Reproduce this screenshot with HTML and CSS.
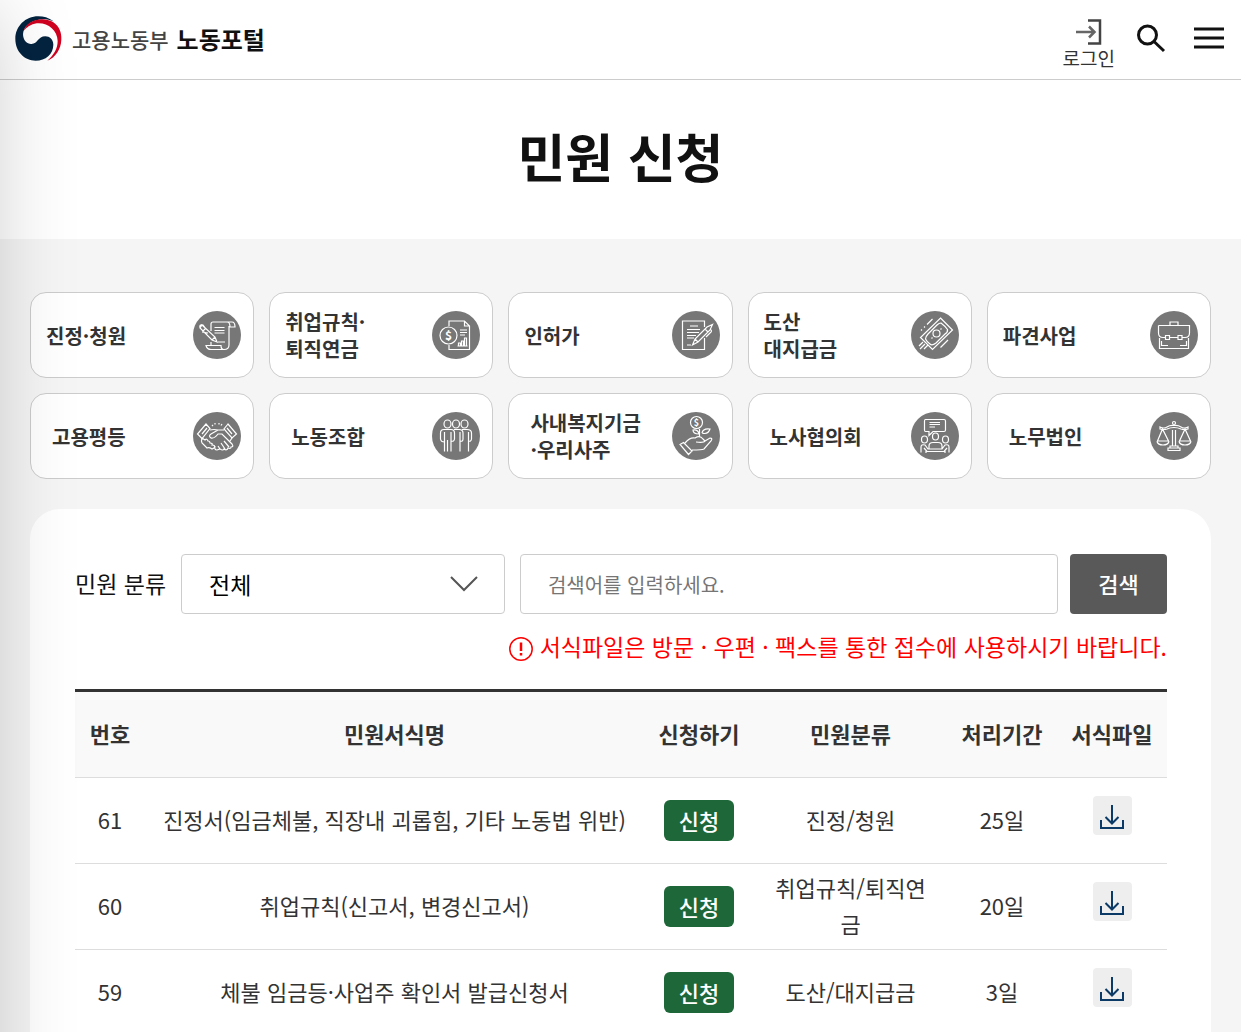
FILE: index.html
```
<!DOCTYPE html>
<html lang="ko">
<head>
    <meta charset="UTF-8">
    <meta name="viewport" content="width=device-width, initial-scale=1.0">
    <title>민원 신청 | 고용노동부 노동포털</title>
    <link rel="stylesheet" href="styles.css">
</head>
<body>
    <header class="header">
        <a href="#" class="logo">
            <svg class="logo-mark" viewBox="0 0 141 135" aria-hidden="true">
                <path fill="#03233f" d="M116 16C100 5 86 1 70 1C31 1 1 31 1 69C1 107 29 134 62 134C92 134 115 114 115 86C115 71 104 61 91 61C67 61 69 86 47 84C31 82 21 65 25 47C34 17 76 0 116 16Z"/>
                <path fill="#d0021f" d="M25 46C36 11 83 0 114 18C133 31 140 49 139 71C138 99 122 124 97 134C117 116 128 98 128 75C127 25 60 0 25 46Z"/>
            </svg>
            <span class="logo-org">고용노동부</span>
            <strong class="logo-name">노동포털</strong>
        </a>
        <div class="utils">
            <a href="#" class="login">
                <svg width="26" height="26" viewBox="0 0 26 26" fill="none" aria-hidden="true">
                    <path stroke="#444" stroke-width="2.500" d="M12 1.500H24V24.500H12"/>
                    <path stroke="#666" stroke-width="2.500" d="M0 13H18M13 7.500L18.500 13L13 18.500"/>
                </svg>
                <span>로그인</span>
            </a>
            <button type="button" class="icon-btn" aria-label="검색 열기">
                <svg width="30" height="30" viewBox="0 0 30 30" fill="none" stroke="#111" stroke-width="3" aria-hidden="true">
                    <circle cx="11.500" cy="12" r="9"/>
                    <path d="M18 18.500L28 28"/>
                </svg>
            </button>
            <button type="button" class="icon-btn" aria-label="전체 메뉴">
                <svg width="30" height="30" viewBox="0 0 30 30" fill="none" stroke="#111" stroke-width="3" aria-hidden="true">
                    <path d="M0 6H30M0 15H30M0 24H30"/>
                </svg>
            </button>
        </div>
    </header>

    <h1 class="page-title">민원 신청</h1>

    <main class="content">
        <nav class="cards" aria-label="민원 분야">
            <a href="#" class="card">
                <span>진정·청원</span>
                <svg class="card-icon" viewBox="0 0 48 48" aria-hidden="true">
                    <path d="M18 20V13Q18 11 20 11H39Q42 11 42 16H37Q37 11 34 11M36 15V34Q36 38.500 31 38.500H18Q14 38.500 13 34.500H28Q28 38.500 31 38.500M18 31V34.500"/>
                    <path d="M21.500 16.500H31.500M21.500 19.500H31.500M21.500 22H31.500M25 31H32" stroke-dasharray="10 1"/>
                    <path d="M9 14L22 26L24 31L19 29L7 17ZM7 17Q6 13 10 14L13 18M10 20L13 17M19 29L22 26M15 22L9 21"/>
                </svg>
            </a>
            <a href="#" class="card">
                <span>취업규칙·<br>퇴직연금</span>
                <svg class="card-icon" viewBox="0 0 48 48" aria-hidden="true">
                    <path d="M17 15V10H32.500L37.500 15V38.500H17V34M32.500 10V15H37.500"/>
                    <circle cx="16.500" cy="24.500" r="8.500"/>
                    <text x="16.500" y="29" class="icon-coin">$</text>
                    <path d="M28 19H35M28 21.500H35M28 24H33M25.500 35H35.500M26.500 35V32H28.500V35M29.500 35V30H31.500V35M32.500 35V27H34.500V35"/>
                </svg>
            </a>
            <a href="#" class="card">
                <span>인허가</span>
                <svg class="card-icon" viewBox="0 0 48 48" aria-hidden="true">
                    <path d="M32.500 16V10H10.500V38.500H32.500V27"/>
                    <path d="M18 15H26M15 18.500H28M15 21.500H27M15 24.500H24M15 27H22M15 34H19"/>
                    <path d="M20.500 34L23 28L35 16L40.500 13.500L38 19L26 31ZM23 28L26 31M33 18L36 21M38 18Q41 20 38 22L34 26"/>
                </svg>
            </a>
            <a href="#" class="card">
                <span>도산<br>대지급금</span>
                <svg class="card-icon" viewBox="0 0 48 48" aria-hidden="true">
                    <path d="M29.500 7L41.500 19L21.500 38.500L9.500 26.500Z"/>
                    <path d="M30 12Q34 15 36.500 18.500Q37 21 34 23L25 32Q21 35 19 33Q16 31 14.500 28Q15 25 17 23L26 14Q28 12 30 12Z"/>
                    <circle cx="25.500" cy="22.500" r="3.500"/>
                    <path d="M29.500 18.500L30.500 17.500M20.500 27.500L21.500 26.500M21.500 8L16 13.500M14 15.500L13 16.500M11 18.500L10 19.500M37 29L29.500 36.500M12 31L8 35M14 33L9 38M17 34L13 38"/>
                </svg>
            </a>
            <a href="#" class="card">
                <span>파견사업</span>
                <svg class="card-icon" viewBox="0 0 48 48" aria-hidden="true">
                    <path d="M8.500 14.500H39.500V22Q39.500 26.500 35 26.500H32M28 26.500H19.500M15.500 26.500H13Q8.500 26.500 8.500 22V14.500M9.500 27V37.500H38.500V27M20 14V11H28V14"/>
                    <path d="M15.500 24.500H19.500V28.500H15.500ZM28 24.500H32V28.500H28ZM11.500 30V34.500H18M36.500 30V34.500H30"/>
                </svg>
            </a>
            <a href="#" class="card card-inset">
                <span>고용평등</span>
                <svg class="card-icon" viewBox="0 0 48 48" aria-hidden="true">
                    <path d="M13 12L17 16.500L9 26.500L4.500 22ZM35 12L31 17L39 26L43.500 22ZM14 16L9 22M34 16L39 22"/>
                    <path d="M17 18Q21 17 25 18L18 22Q15 24 18 26Q21 27 25 22H29L39 32Q41 35 38 35Q38 37 35 36Q34 39 31 37Q30 39 27 37L24 38Q21 38 22 34M31 18H26L25 18M39 26L37 29M31 29L36 35M28 31L32 37M25 34L27 37"/>
                    <path d="M9 26L12 28Q14 26 15 29Q17 29 17 31Q20 31 19 33Q23 33 21 36L19 37Q16 35 14 36L9 31Q8 29 9 26"/>
                    <path d="M19 13L20 14M22 11V12.500M26 11V12.500M29 12L28 13.500"/>
                </svg>
            </a>
            <a href="#" class="card card-inset">
                <span>노동조합</span>
                <svg class="card-icon" viewBox="0 0 48 48" aria-hidden="true">
                    <ellipse cx="15.500" cy="12" rx="3.500" ry="4"/>
                    <ellipse cx="24" cy="12" rx="3.500" ry="4"/>
                    <ellipse cx="32.500" cy="12" rx="3.500" ry="4"/>
                    <path d="M12.500 39.500V20M12.500 30Q9 30 8.500 27V21Q8.500 17.500 12 17.500H19Q22.500 17.500 22.500 21V27Q22 30 19 29V20M19 39.500V29M15.500 28V39.500"/>
                    <path d="M22 17.500H27Q31 17.500 31 21V27Q31 30 28 29V20M28 29V39.500"/>
                    <path d="M30 17.500H35Q39.500 17.500 39.500 21V27Q39 30 36.500 29V20M36.500 29V39.500"/>
                </svg>
            </a>
            <a href="#" class="card card-inset">
                <span>사내복지기금<br>·우리사주</span>
                <svg class="card-icon" viewBox="0 0 48 48" aria-hidden="true">
                    <circle cx="24.500" cy="10.500" r="6"/>
                    <text x="24.500" y="14" class="icon-coin icon-coin-small">$</text>
                    <path d="M27.500 17V25M27 22Q21 22 21 18Q26 17 27 22M30 21Q31 16 38 17Q36 23 30 21"/>
                    <path d="M8 32.500L11.500 30.500L20 39L16.500 42.500ZM13 31Q18 25 23 26Q28 23 31 27L33 29Q32 31 24 30M33 29L38 26Q41 26 39 29L32 37Q30 38 20 38"/>
                </svg>
            </a>
            <a href="#" class="card card-inset">
                <span>노사협의회</span>
                <svg class="card-icon" viewBox="0 0 48 48" aria-hidden="true">
                    <path d="M14.500 7.500H33Q34.500 7.500 34.500 9V18Q34.500 19.500 33 19.500H22L18 23.500V19.500H14.500Q13.500 19.500 13.500 18V9Q13.500 7.500 14.500 7.500ZM18.500 10.500H29M18.500 12.500H29M18.500 15H24"/>
                    <ellipse cx="24.500" cy="24.500" rx="3" ry="3.500"/>
                    <ellipse cx="13.500" cy="27.500" rx="3" ry="3.500"/>
                    <ellipse cx="34.500" cy="27.500" rx="3" ry="3.500"/>
                    <path d="M18 37V34Q18 30.500 22 30.500H27Q31 30.500 31 34V37M10 40.500V35Q10 32 14 33L17 37H31L34 33Q38 32 38 35V40.500M13 36L16 39.500H33L36 36M15 39V41M34 39V41"/>
                </svg>
            </a>
            <a href="#" class="card card-inset">
                <span>노무법인</span>
                <svg class="card-icon" viewBox="0 0 48 48" aria-hidden="true">
                    <circle cx="24" cy="11" r="1.500"/>
                    <path d="M22.500 34V18M25.500 34V18M24 13.500Q28 13 31 15Q34 17 38 15V17Q34 18 31 17Q24 14 17 17Q14 18 10 17V15Q14 17 17 15Q20 13 24 13.500Z"/>
                    <path d="M18 38.500V36H30V38.500ZM20 36V34H28V36M12.500 17L7.500 29H18.500ZM7 29.500Q8 33 13 33Q18 33 19 29.500M35 17L29.500 29H40.500ZM29 29.500Q30 33 35 33Q40 33 41 29.500"/>
                </svg>
            </a>
        </nav>

        <section class="panel">
            <form class="search">
                <label for="category">민원 분류</label>
                <select id="category" class="search-select">
                    <option>전체</option>
                    <option>진정/청원</option>
                    <option>취업규칙/퇴직연금</option>
                    <option>도산/대지급금</option>
                </select>
                <input type="text" class="search-input" aria-label="검색어" placeholder="검색어를 입력하세요.">
                <button type="submit" class="search-btn">검색</button>
            </form>
            <p class="notice">
                <svg width="24" height="24" viewBox="0 0 24 24" fill="none" stroke="#f00" aria-hidden="true">
                    <circle cx="12" cy="12" r="11.200" stroke-width="1.500"/>
                    <path stroke-width="2.500" d="M12 5.500V14M12 16V18.500"/>
                </svg>
                서식파일은 방문 · 우편 · 팩스를 통한 접수에 사용하시기 바랍니다.
            </p>

            <table class="forms">
                <thead>
                    <tr>
                        <th class="col-no">번호</th>
                        <th>민원서식명</th>
                        <th class="col-short">신청하기</th>
                        <th class="col-type">민원분류</th>
                        <th class="col-short">처리기간</th>
                        <th class="col-short">서식파일</th>
                    </tr>
                </thead>
                <tbody>
                    <tr>
                        <td>61</td>
                        <td>진정서(임금체불, 직장내 괴롭힘, 기타 노동법 위반)</td>
                        <td class="action"><button type="button" class="apply">신청</button></td>
                        <td>진정/청원</td>
                        <td>25일</td>
                        <td class="file">
                            <a href="#" class="download" aria-label="서식파일 내려받기">
                                <svg width="24" height="26" viewBox="0 0 24 26" aria-hidden="true"><path d="M12 2V20M5.500 14L12 20.500L18.500 14M1 17V25H23V17"/></svg>
                            </a>
                        </td>
                    </tr>
                    <tr>
                        <td>60</td>
                        <td>취업규칙(신고서, 변경신고서)</td>
                        <td class="action"><button type="button" class="apply">신청</button></td>
                        <td>취업규칙/퇴직연금</td>
                        <td>20일</td>
                        <td class="file">
                            <a href="#" class="download" aria-label="서식파일 내려받기">
                                <svg width="24" height="26" viewBox="0 0 24 26" aria-hidden="true"><path d="M12 2V20M5.500 14L12 20.500L18.500 14M1 17V25H23V17"/></svg>
                            </a>
                        </td>
                    </tr>
                    <tr>
                        <td>59</td>
                        <td>체불 임금등·사업주 확인서 발급신청서</td>
                        <td class="action"><button type="button" class="apply">신청</button></td>
                        <td>도산/대지급금</td>
                        <td>3일</td>
                        <td class="file">
                            <a href="#" class="download" aria-label="서식파일 내려받기">
                                <svg width="24" height="26" viewBox="0 0 24 26" aria-hidden="true"><path d="M12 2V20M5.500 14L12 20.500L18.500 14M1 17V25H23V17"/></svg>
                            </a>
                        </td>
                    </tr>
                </tbody>
            </table>
        </section>
    </main>

    <!-- closed side menu, only its shadow reaches into the page -->
    <div class="side-menu"></div>
</body>
</html>
```
FILE: styles.css
```
* {
    box-sizing: border-box;
}
body {
    margin: 0;
    font-family: "Noto Sans CJK KR", sans-serif;
    font-size: 22px;
    line-height: 36px;
    color: #333;
    background-color: #fff;
    overflow-x: hidden;
}
a {
    color: inherit;
    text-decoration: none;
}
button, input, select {
    font-family: inherit;
}
button {
    border: none;
    cursor: pointer;
}

.header {
    display: flex;
    align-items: center;
    justify-content: space-between;
    height: 80px;
    padding: 0 17px 0 15px;
    border-bottom: 1px solid #ccc;
}
.logo {
    display: flex;
    align-items: center;
    padding-bottom: 2px;
}
.logo-mark {
    width: 47px;
    height: 45px;
    margin-right: 10px;
}
.logo-org {
    margin-right: 8px;
    font-size: 21px;
    font-weight: 500;
    color: #444;
}
.logo-name {
    font-size: 24px;
    color: #111;
}
.utils {
    display: flex;
    align-items: center;
}
.login {
    display: flex;
    flex-direction: column;
    align-items: center;
    padding-top: 10px;
    margin-right: 21px;
    font-size: 19px;
    line-height: 26px;
}
.icon-btn {
    display: flex;
    padding: 0 0 4px;
    background: none;
}
.icon-btn + .icon-btn {
    margin-left: 28px;
}

.page-title {
    margin: 0;
    padding: 40px 0 47px;
    font-size: 52px;
    line-height: 72px;
    text-align: center;
    color: #111;
}

.content {
    padding: 53px 30px 0;
    background-color: #f5f5f5;
}
.cards {
    display: grid;
    grid-template-columns: repeat(5, 1fr);
    gap: 15px;
}
.card {
    display: flex;
    align-items: center;
    justify-content: space-between;
    height: 86px;
    padding: 0 12px 0 15px;
    border: 1px solid #ccc;
    border-radius: 16px;
    background-color: #fff;
    font-size: 20px;
    font-weight: bold;
    line-height: 27px;
}
.card-inset {
    padding-left: 21px;
}
.card-icon {
    flex: none;
    width: 48px;
    height: 48px;
    border-radius: 50%;
    background-color: #777;
    fill: none;
    stroke: #fff;
    stroke-width: 1.2;
}
.icon-coin {
    fill: #fff;
    stroke: none;
    font-size: 12px;
    text-anchor: middle;
}
.icon-coin-small {
    font-size: 9px;
}

.panel {
    margin-top: 30px;
    padding: 45px 44px 60px 45px;
    border-radius: 30px 30px 0 0;
    background-color: #fff;
}
.search {
    display: flex;
    align-items: center;
}
.search label {
    margin-right: 15px;
    padding-bottom: 2px;
    font-size: 23px;
    color: #111;
}
.search-select,
.search-input {
    min-width: 0;
    height: 60px;
    padding: 0 27px;
    border: 1px solid #ccc;
    border-radius: 4px;
    background-color: #fff;
}
.search-select {
    flex: 5;
    margin-right: 15px;
    appearance: none;
    background-image: url("data:image/svg+xml,%3Csvg xmlns='http://www.w3.org/2000/svg' width='28' height='16' fill='none' stroke='%23555' stroke-width='2'%3E%3Cpath d='M1 1L14 14L27 1'/%3E%3C/svg%3E");
    background-repeat: no-repeat;
    background-position: right 26px center;
    font-size: 23px;
    color: #000;
}
.search-input {
    flex: 9;
    margin-right: 12px;
    font-size: 20px;
}
.search-input::placeholder {
    color: #757575;
}
.search-btn {
    width: 97px;
    height: 60px;
    padding: 0 0 2px;
    border-radius: 4px;
    background-color: #595959;
    font-size: 22px;
    font-weight: 500;
    color: #fff;
}
.notice {
    display: flex;
    align-items: center;
    justify-content: flex-end;
    gap: 7px;
    margin: 14px 0 25px;
    font-size: 23px;
    color: #f00;
}
.notice svg {
    margin-top: 6px;
}

.forms {
    width: 100%;
    table-layout: fixed;
    border-collapse: collapse;
    border-top: 3px solid #333;
    text-align: center;
}
.forms th,
.forms td {
    height: 86px;
    padding: 0 15px 4px;
    border-bottom: 1px solid #ddd;
}
.forms th {
    height: 87px;
    padding: 0 0 4px;
    background-color: #f9f9f9;
}
.forms .col-no {
    width: 70px;
}
.forms .col-short {
    width: 110px;
}
.forms .col-type {
    width: 193px;
}
.forms .action {
    padding-bottom: 2px;
}
.apply {
    height: 41px;
    padding: 0 15px;
    border-radius: 6px;
    background-color: #1d6738;
    font-size: 22px;
    font-weight: 500;
    line-height: 41px;
    color: #fff;
    vertical-align: middle;
}
.forms .file {
    padding-bottom: 12px;
}
.download {
    display: inline-flex;
    align-items: center;
    justify-content: center;
    width: 39px;
    height: 39px;
    border-radius: 4px;
    background-color: #eee;
    vertical-align: middle;
}
.download svg {
    fill: none;
    stroke: #0b3a66;
    stroke-width: 2;
}

.side-menu {
    position: fixed;
    top: 0;
    bottom: -100px;
    right: 100%;
    width: 300px;
    box-shadow: 0 0 80px -10px rgba(0, 0, 0, 0.22);
    pointer-events: none;
}
```
